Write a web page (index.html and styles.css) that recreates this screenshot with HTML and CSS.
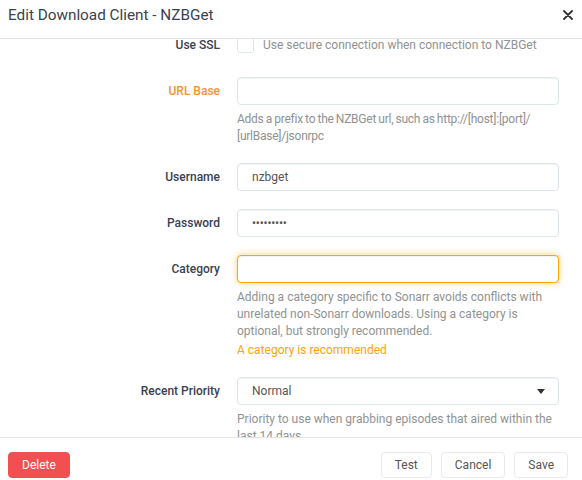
FILE: index.html
```html
<!DOCTYPE html>
<html>
<head>
<meta charset="utf-8">
<link rel="stylesheet" href="styles.css">
</head>
<body>
<div class="modal">
  <div class="modal-header">
    <div class="modal-title">Edit Download Client - NZBGet</div>
    <button class="close-btn" aria-label="Close">
      <svg width="10" height="10" viewBox="0 0 10 10"><path d="M1 1 L9 9 M9 1 L1 9" stroke="#333" stroke-width="1.8" stroke-linecap="round"/></svg>
    </button>
  </div>
  <div class="modal-body">
    <div class="body-inner">
      <div class="form-group check-group">
        <label class="form-label">Use SSL</label>
        <div class="form-control check-control">
          <span class="checkbox"></span>
          <span class="check-help">Use secure connection when connection to NZBGet</span>
        </div>
      </div>

      <div class="form-group">
        <label class="form-label warning">URL Base</label>
        <div class="form-control">
          <input class="text-input" type="text" value="">
          <div class="help-text url-help">Adds a prefix to the NZBGet url, such as http://[host]:[port]/ [urlBase]/jsonrpc</div>
        </div>
      </div>

      <div class="form-group">
        <label class="form-label">Username</label>
        <div class="form-control">
          <input class="text-input" type="text" value="nzbget">
        </div>
      </div>

      <div class="form-group">
        <label class="form-label">Password</label>
        <div class="form-control">
          <input class="text-input password" type="text" value="•••••••••">
        </div>
      </div>

      <div class="form-group">
        <label class="form-label">Category</label>
        <div class="form-control">
          <input class="text-input input-warning" type="text" value="">
          <div class="help-text">Adding a category specific to Sonarr avoids conflicts with unrelated non-Sonarr downloads. Using a category is optional, but strongly recommended.</div>
          <div class="warning-text">A category is recommended</div>
        </div>
      </div>

      <div class="form-group">
        <label class="form-label">Recent Priority</label>
        <div class="form-control">
          <div class="select-input"><span>Normal</span><span class="caret"></span></div>
          <div class="help-text">Priority to use when grabbing episodes that aired within the last 14 days</div>
        </div>
      </div>
    </div>
  </div>
  <div class="modal-footer">
    <button class="btn btn-danger">Delete</button>
    <div class="footer-right">
      <button class="btn">Test</button>
      <button class="btn">Cancel</button>
      <button class="btn">Save</button>
    </div>
  </div>
</div>
</body>
</html>
```
FILE: styles.css
```css
* { box-sizing: border-box; }
html, body { margin: 0; padding: 0; background: #fff; }
body {
  font-family: Roboto, "Liberation Sans", Arial, sans-serif;
  color: #3a3f51;
  font-size: 12px;
}
.modal {
  width: 582px;
  height: 480px;
  display: flex;
  flex-direction: column;
  overflow: hidden;
}
.modal-header {
  flex: 0 0 39px;
  display: flex;
  align-items: flex-start;
  justify-content: space-between;
  border-bottom: 1px solid #e5e5e5;
  padding: 1px 0 0 8px;
}
.modal-title {
  font-size: 15.3px;
  line-height: 28px;
  color: #3a3f51;
}
.close-btn {
  border: 0;
  background: none;
  padding: 0;
  width: 10px;
  height: 10px;
  margin: 9px 9px 0 0;
  display: flex;
}
.modal-body {
  flex: 1 1 auto;
  overflow: hidden;
}
.body-inner {
  margin-top: -8px;
  padding-right: 23px;
}
.form-group {
  display: flex;
  align-items: flex-start;
  margin-bottom: 18px;
}
.form-label {
  flex: 0 0 220px;
  text-align: right;
  line-height: 28px;
  font-weight: 500;
  color: #3a3f51;
}
.form-label.warning { color: #ff902b; }
.form-control {
  flex: 1 1 auto;
  margin-left: 17px;
}
.check-control {
  display: flex;
  align-items: center;
  height: 28px;
}
.checkbox {
  flex: 0 0 17px;
  height: 16px;
  border: 1px solid #dde6e9;
  border-radius: 3px;
  background: #fff;
  margin-right: 9px;
}
.check-help { color: #909293; white-space: nowrap; }
.text-input, .select-input {
  display: block;
  width: 100%;
  height: 28px;
  border: 1px solid #dde6e9;
  border-radius: 4px;
  padding: 0 14px;
  font-family: inherit;
  font-size: 12px;
  color: #555;
  background: #fff;
  outline: none;
  box-shadow: inset 0 1px 1px rgba(0,0,0,0.05);
}
.password { letter-spacing: -0.2px; }
.input-warning {
  border-color: #ffa500;
  box-shadow: inset 0 1px 1px rgba(0,0,0,0.05), 0 0 6px rgba(255,165,0,0.55);
}
.select-input {
  display: flex;
  align-items: center;
  justify-content: space-between;
  padding-right: 13px;
}
.caret {
  width: 0;
  height: 0;
  border-left: 4.5px solid transparent;
  border-right: 4.5px solid transparent;
  border-top: 5px solid #333;
}
.help-text {
  margin-top: 6px;
  line-height: 17px;
  color: #909293;
}
.url-help { letter-spacing: -0.25px; word-spacing: -0.5px; margin-right: -4px; }
.warning-text {
  margin-top: 2px;
  line-height: 17px;
  color: #ffa500;
}
.modal-footer {
  flex: 0 0 43px;
  border-top: 1px solid #e5e5e5;
  display: flex;
  justify-content: space-between;
  align-items: flex-start;
  padding: 14px 14px 0 8px;
}
.footer-right {
  display: flex;
  gap: 9px;
}
.btn {
  height: 26px;
  padding: 0 13px;
  border: 1px solid #eaeaea;
  border-radius: 4px;
  background: #fff;
  font-family: inherit;
  font-size: 12px;
  color: #555;
  line-height: 24px;
}
.btn-danger {
  background: #f05050;
  border-color: #f05050;
  color: #fff;
  padding: 0 13px;
}
```
